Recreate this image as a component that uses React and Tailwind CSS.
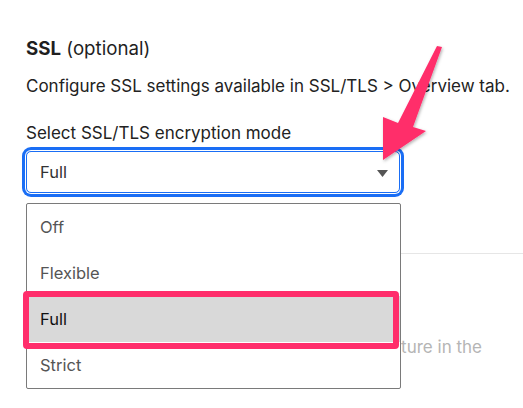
import React from "react";

export default function App() {
  return (
    <div className="relative w-[523px] h-[408px] overflow-hidden bg-white text-[#222]" style={{ fontFamily: "Inter, 'Noto Sans', sans-serif" }}>
      <div className="pl-[26px] pt-[36px]">
        <h3 className="text-[18.7px] leading-[26px] text-[#1f1f1f]">
          <span className="font-bold">SSL</span> (optional)
        </h3>
        <p className="mt-[12px] text-[17px] leading-[24px] text-[#222]">
          Configure SSL settings available in SSL/TLS &gt; Overview tab.
        </p>
        <p className="mt-[23px] text-[17px] leading-[24px] text-[#222]">Select SSL/TLS encryption mode</p>
        <div className="relative mt-[6px] w-[374px]">
          <div className="flex h-[42px] items-center justify-between rounded-[5px] border border-[#1a6ef5] pl-[13px] pr-[11px] shadow-[0_0_0_1px_#ffffff,0_0_0_4px_#1a6ef5]">
            <span className="text-[16.5px] text-[#333]">Full</span>
            <svg width="11" height="7" viewBox="0 0 11 7" className="mt-[2px]">
              <polygon points="0,0 11,0 5.5,7" fill="#555" />
            </svg>
          </div>
        </div>
        <div className="mt-[60px] border-t border-[#e6e6e6]" />
        <p className="mt-[81px] pr-[41px] text-right text-[17px] leading-[24px] text-[#b5b5b5] whitespace-nowrap overflow-hidden">
          Enable this feature in the
        </p>
      </div>

      <div className="absolute left-[26px] top-[203px] w-[375px] rounded-[2px] border border-[#7a7a7a] bg-white">
        <div className="flex h-[46px] items-center pl-[13px] text-[16.5px] text-[#555]">Off</div>
        <div className="flex h-[46px] items-center pl-[13px] text-[16.5px] text-[#555]">Flexible</div>
        <div className="flex h-[46px] items-center bg-[#d9d9d9] pl-[13px] text-[16.5px] text-[#111]">Full</div>
        <div className="flex h-[46px] items-center pl-[13px] text-[16.5px] text-[#555]">Strict</div>
      </div>

      <div className="absolute left-[23px] top-[291px] h-[58px] w-[376px] rounded-[4px] border-[6px] border-[#ff2d6b]" />

      <svg className="absolute left-0 top-0" width="523" height="408" viewBox="0 0 523 408">
        <defs>
          <filter id="sh" x="-20%" y="-20%" width="140%" height="140%">
            <feDropShadow dx="1" dy="1.5" stdDeviation="1.5" floodColor="#000" floodOpacity="0.3" />
          </filter>
        </defs>
        <polygon
          points="437,46 442,47 413,127 426,131 383,160 383,117 398,123"
          fill="#ff2d6b"
          filter="url(#sh)"
        />
      </svg>
    </div>
  );
}
